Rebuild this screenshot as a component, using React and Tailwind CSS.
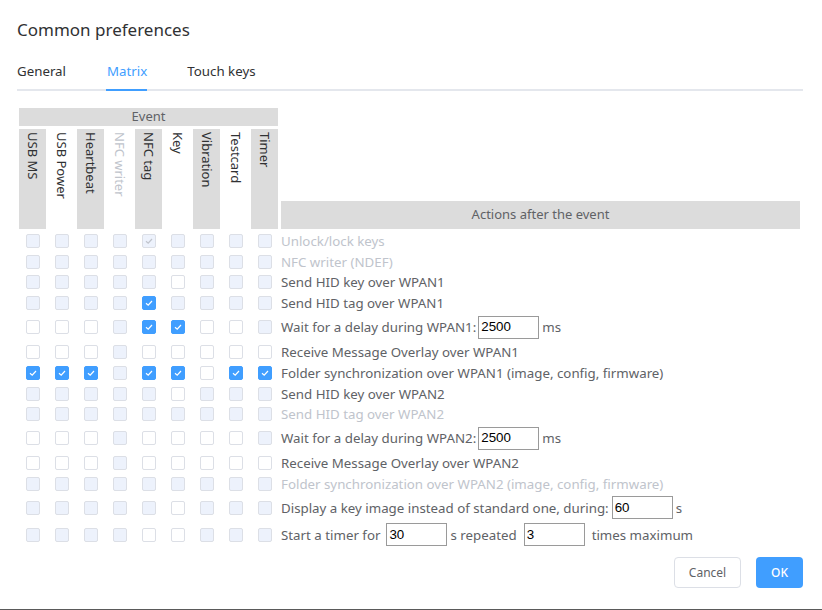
import React from "react";

const COLS = ["USB MS", "USB Power", "Heartbeat", "NFC writer", "NFC tag", "Key", "Vibration", "Testcard", "Timer"];
const GRAY = [true, false, true, false, true, false, true, false, true];

// d = disabled, u = unchecked, c = checked, x = disabled checked
const ROWS = [
  { h: "h-[20px]", s: "d d d d x d d d d", label: "Unlock/lock keys", dis: true },
  { h: "h-[21px]", s: "d d d d d d d d d", label: "NFC writer (NDEF)", dis: true },
  { h: "h-[20px]", s: "d d d d d u d d d", label: "Send HID key over WPAN1" },
  { h: "h-[21px]", s: "d d d d c d d d d", label: "Send HID tag over WPAN1" },
  { h: "h-[28px]", s: "u u u d c c u u d", kind: "wait1" },
  { h: "h-[21px]", s: "u u u d u u u u u", label: "Receive Message Overlay over WPAN1" },
  { h: "h-[21px]", s: "c c c d c c u c c", label: "Folder synchronization over WPAN1 (image, config, firmware)" },
  { h: "h-[21px]", s: "d d d d d u d d d", label: "Send HID key over WPAN2" },
  { h: "h-[20px]", s: "d d d d d d d d d", label: "Send HID tag over WPAN2", dis: true },
  { h: "h-[28px]", s: "u u u d u u u u d", kind: "wait2" },
  { h: "h-[21px]", s: "u u u d u u u u u", label: "Receive Message Overlay over WPAN2" },
  { h: "h-[21px]", s: "d d d d d d d d d", label: "Folder synchronization over WPAN2 (image, config, firmware)", dis: true },
  { h: "h-[27px]", s: "d d d d d u d d d", kind: "display" },
  { h: "h-[27px]", s: "d d d d u u d d d", kind: "timer" },
];

function Check({ color }) {
  return (
    <svg width="10" height="10" viewBox="0 0 10 10" fill="none">
      <polyline points="2,5.2 4.2,7.2 8,3" stroke={color} strokeWidth="1.2" fill="none" />
    </svg>
  );
}

function Box({ st }) {
  if (st === "c")
    return (
      <div className="w-[14px] h-[14px] rounded-[2px] bg-[#409eff] border border-[#409eff] flex items-center justify-center">
        <Check color="#ffffff" />
      </div>
    );
  if (st === "x")
    return (
      <div className="w-[14px] h-[14px] rounded-[2px] bg-[#edf2fc] border border-[#dcdfe6] flex items-center justify-center">
        <Check color="#c0c4cc" />
      </div>
    );
  if (st === "u")
    return <div className="w-[14px] h-[14px] rounded-[2px] bg-white border border-[#dcdfe6]" />;
  return <div className="w-[14px] h-[14px] rounded-[2px] bg-[#edf2fc] border border-[#dcdfe6]" />;
}

function Inp({ v, cls }) {
  return (
    <div
      className={`w-[61px] h-[23px] border border-[#9a9a9a] bg-white flex items-center pl-[2px] text-[13.33px] text-black ${cls || ""}`}
      style={{ fontFamily: '"Liberation Sans", Arial, sans-serif' }}
    >
      {v}
    </div>
  );
}

function Label({ row }) {
  const color = row.dis ? "text-[#c0c4cc]" : "text-[#606266]";
  if (row.kind === "wait1" || row.kind === "wait2") {
    return (
      <div className={`flex items-center ${color}`}>
        <span>Wait for a delay during {row.kind === "wait1" ? "WPAN1" : "WPAN2"}:</span>
        <Inp v="2500" cls="ml-[2px] mr-[3px]" />
        <span>ms</span>
      </div>
    );
  }
  if (row.kind === "display") {
    return (
      <div className={`flex items-center ${color}`}>
        <span>Display a key image instead of standard one, during:</span>
        <Inp v="60" cls="ml-[3px] mr-[3px]" />
        <span>s</span>
      </div>
    );
  }
  if (row.kind === "timer") {
    return (
      <div className={`flex items-center ${color}`}>
        <span>Start a timer for</span>
        <Inp v="30" cls="ml-[6px] mr-[3px]" />
        <span>s repeated</span>
        <Inp v="3" cls="ml-[7px] mr-[7px]" />
        <span>times maximum</span>
      </div>
    );
  }
  return <div className={color}>{row.label}</div>;
}

export default function App() {
  return (
    <div
      className="w-[822px] h-[610px] bg-white flex flex-col overflow-hidden"
      style={{ fontFamily: '"Noto Sans", "Open Sans", sans-serif' }}
    >
      <div className="flex-1 flex flex-col px-[17px] pt-[18px]">
        <div className="text-[17px] leading-[24px] text-[#303133]">Common preferences</div>

        {/* Tabs */}
        <div className="mt-[9px] w-[786px] flex border-b-2 border-[#e4e7ed] text-[13.3px] text-[#303133]">
          <div className="h-[38px] pt-[3px] flex items-center">General</div>
          <div className="ml-[41px] h-[38px] pt-[3px] flex items-center relative text-[#409eff]">
            Matrix
            <div className="absolute left-[-1px] right-0 bottom-[-2px] h-[2px] bg-[#409eff]" />
          </div>
          <div className="ml-[40px] h-[38px] pt-[3px] flex items-center">Touch keys</div>
        </div>

        {/* Matrix */}
        <div className="mt-[17px] ml-[2px] flex flex-col text-[13px]">
          <div className="flex items-end">
            <div className="w-[259px] flex flex-col">
              <div className="h-[18px] bg-[#dcdcdc] text-[#606266] flex items-center justify-center">Event</div>
              <div className="mt-[3px] flex gap-[2px]">
                {COLS.map((c, i) => (
                  <div
                    key={c}
                    className={`w-[27px] h-[100px] flex justify-center pt-[3px] ${GRAY[i] ? "bg-[#dcdcdc]" : "bg-white"} ${
                      c === "NFC writer" ? "text-[#c0c4cc]" : "text-[#303133]"
                    }`}
                  >
                    <span className="leading-[16px]" style={{ writingMode: "vertical-rl" }}>
                      {c}
                    </span>
                  </div>
                ))}
              </div>
            </div>
            <div className="ml-[3px] w-[519px] h-[28px] bg-[#dcdcdc] text-[#606266] flex items-center justify-center">
              Actions after the event
            </div>
          </div>

          <div className="mt-[2px] flex flex-col">
            {ROWS.map((r, ri) => (
              <div key={ri} className={`flex items-center ${r.h}`}>
                <div className="w-[259px] flex gap-[2px]">
                  {r.s.split(" ").map((st, ci) => (
                    <div key={ci} className="w-[27px] flex justify-center">
                      <Box st={st} />
                    </div>
                  ))}
                </div>
                <div className="ml-[3px] text-[13.3px] leading-[18px]">
                  <Label row={r} />
                </div>
              </div>
            ))}
          </div>
        </div>

        {/* Buttons */}
        <div className="mt-[9px] w-[786px] flex justify-end gap-[15px] text-[12px]">
          <button className="w-[67px] h-[31px] rounded-[4px] border border-[#dcdfe6] bg-white text-[#606266]">
            Cancel
          </button>
          <button className="w-[47px] h-[31px] rounded-[4px] bg-[#409eff] text-white font-medium">OK</button>
        </div>
      </div>
      <div className="h-[1px] bg-[#5a5a5a]" />
    </div>
  );
}
